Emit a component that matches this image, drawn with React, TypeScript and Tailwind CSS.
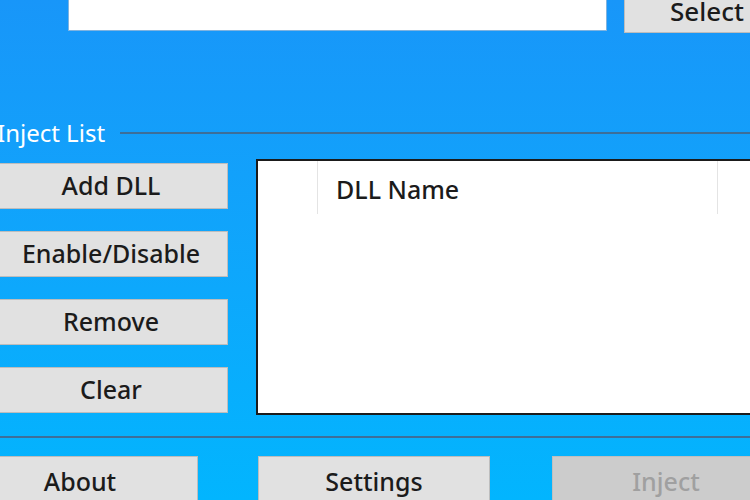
export default function App() {
  const font = { fontFamily: '"Noto Sans", "Open Sans", sans-serif' };
  const sideBtn =
    "h-[46px] w-[234px] -ml-[6px] bg-[#e1e1e1] border border-[#bdbdbd] text-[25px] font-medium text-[#1b1b1b] flex items-center justify-center";
  const bottomBtn =
    "h-[46px] shrink-0 bg-[#e1e1e1] border border-[#bdbdbd] text-[25px] font-medium text-[#1b1b1b] flex items-center justify-center";

  return (
    <div
      className="w-[750px] h-[500px] overflow-hidden flex flex-col bg-gradient-to-b from-[#1896f9] to-[#02b5fe]"
      style={font}
    >
      {/* Path row */}
      <div className="flex items-start h-[33px] -mt-[1px] pl-[68px] shrink-0">
        <div className="w-[539px] h-[32px] shrink-0 bg-white border border-[#7fb3e0] border-t-0" />
        <button className="ml-[17px] w-[135px] h-[34px] shrink-0 bg-[#e1e1e1] border border-[#bdbdbd] border-t-0 text-[26px] font-medium text-[#1b1b1b] flex items-start justify-start pl-[45px] pt-[1px] leading-[22px]">
          Select
        </button>
      </div>

      {/* Inject List group header */}
      <div className="flex items-center mt-[86px] h-[30px] shrink-0">
        <span className="-ml-[3px] text-[24px] text-white leading-none">Inject List</span>
        <div className="ml-[15px] flex-1 h-[2px] bg-[#3d6f99]" />
      </div>

      {/* Main area */}
      <div className="flex mt-[11px] shrink-0">
        <div className="flex flex-col gap-[22px] pt-[4px] shrink-0">
          <button className={sideBtn}>Add DLL</button>
          <button className={sideBtn}>Enable/Disable</button>
          <button className={sideBtn}>Remove</button>
          <button className={sideBtn}>Clear</button>
        </div>
        <div className="ml-[28px] w-[520px] h-[256px] shrink-0 bg-white border-2 border-[#1b1b1b] flex flex-col">
          <div className="flex h-[53px] shrink-0">
            <div className="w-[60px] border-r border-[#e4e4e4]" />
            <div className="w-[400px] border-r border-[#e4e4e4] pl-[18px] pt-[16px] text-[25px] font-medium text-[#1b1b1b] leading-none">
              DLL Name
            </div>
          </div>
        </div>
      </div>

      {/* Divider */}
      <div className="mt-[21px] h-[2px] bg-[#3d6f99] shrink-0" />

      {/* Bottom buttons */}
      <div className="flex mt-[18px] shrink-0">
        <button className={`${bottomBtn} w-[236px] -ml-[38px] pt-[6px]`}>About</button>
        <button className={`${bottomBtn} w-[232px] ml-[60px] pt-[6px]`}>Settings</button>
        <button className="h-[46px] w-[228px] shrink-0 ml-[62px] bg-[#cccccc] border border-[#bfbfbf] text-[25px] font-medium text-[#a0a0a0] flex items-center justify-center pt-[6px]">
          Inject
        </button>
      </div>
    </div>
  );
}
